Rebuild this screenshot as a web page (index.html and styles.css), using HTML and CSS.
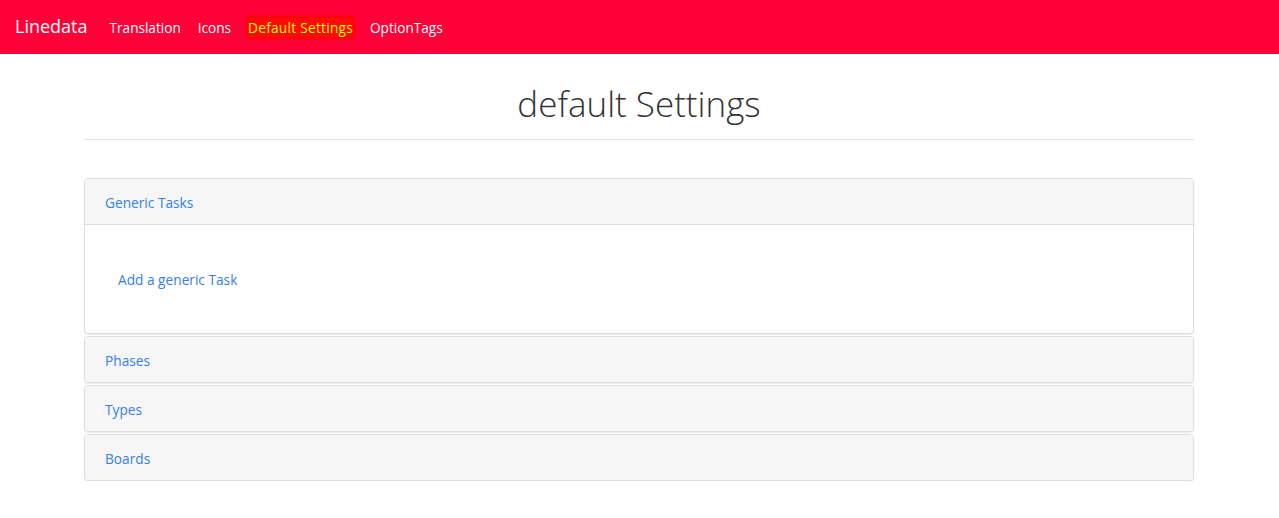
FILE: index.html
```html
<!DOCTYPE html>
<html>
<head>
<meta charset="utf-8">
<link rel="stylesheet" href="styles.css">
</head>
<body>
<nav class="navbar">
  <a class="brand" href="#">Linedata</a>
  <ul class="nav">
    <li><a href="#">Translation</a></li>
    <li><a href="#">Icons</a></li>
    <li><a href="#" class="active">Default Settings</a></li>
    <li><a href="#">OptionTags</a></li>
  </ul>
</nav>
<main class="container">
  <h1 class="title">default Settings</h1>
  <hr class="rule">
  <div class="panel-group">
    <div class="panel">
      <div class="panel-heading"><a href="#">Generic Tasks</a></div>
      <div class="panel-body"><a class="add-link" href="#">Add a generic Task</a></div>
    </div>
    <div class="panel">
      <div class="panel-heading"><a href="#">Phases</a></div>
    </div>
    <div class="panel">
      <div class="panel-heading"><a href="#">Types</a></div>
    </div>
    <div class="panel">
      <div class="panel-heading"><a href="#">Boards</a></div>
    </div>
  </div>
</main>
</body>
</html>
```
FILE: styles.css
```css
* { box-sizing: border-box; }
body {
  margin: 0;
  font-family: "Open Sans", "Noto Sans", sans-serif;
  font-size: 14px;
  color: #333;
  background: #fff;
}
a { text-decoration: none; }
.navbar {
  height: 54px;
  background: #ff0039;
  display: flex;
  align-items: center;
  padding: 0 15px;
}
.brand {
  color: #fff;
  font-size: 18px;
  margin-right: 22px;
  position: relative;
  top: -1px;
}
.nav {
  list-style: none;
  margin: 0;
  padding: 0;
  display: flex;
  gap: 17px;
}
.nav a {
  color: #fff;
  font-size: 13.6px;
}
.nav a.active {
  color: #ffff00;
  background: #ff0a0a;
  box-shadow: 0 0 3px 2px #ff0000;
  text-shadow: 0 0 2px #ff0000;
  letter-spacing: 0.3px;
}
.container {
  width: 1110px;
  margin-left: calc(50% - 555.5px);
}
.title {
  margin: 28px 0 0;
  text-align: center;
  font-weight: 300;
  font-size: 35px;
  line-height: 44px;
  color: #333;
}
.rule {
  margin: 13px 0 38px;
  border: 0;
  border-top: 1px solid #e5e5e5;
}
.panel-group {
  display: flex;
  flex-direction: column;
  gap: 2px;
}
.panel {
  border: 1px solid #ddd;
  border-radius: 4px;
  background: #fff;
  box-shadow: 0 1px 1px rgba(0,0,0,.08);
  overflow: hidden;
}
.panel-heading {
  background: #f6f6f6;
  height: 45px;
  padding: 1px 20px 0;
  display: flex;
  align-items: center;
}
.panel-heading a, .add-link {
  color: #3580e4;
  font-size: 13.7px;
}
.panel-body {
  border-top: 1px solid #ddd;
  height: 109px;
  padding: 1px 33px 0;
  display: flex;
  align-items: center;
}
```
